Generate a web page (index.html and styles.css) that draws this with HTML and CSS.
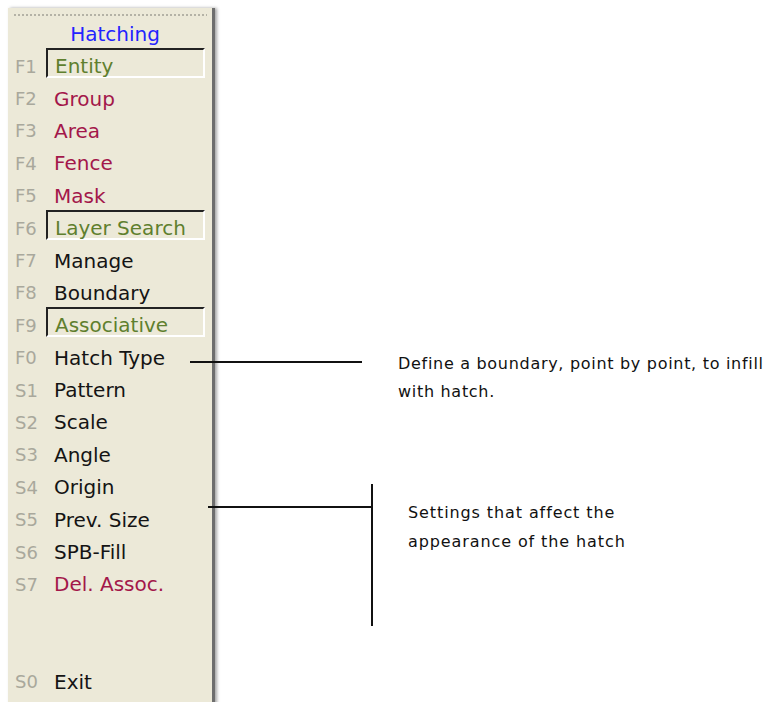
FILE: index.html
```html
<!DOCTYPE html>
<html lang="en">
<head>
  <meta charset="UTF-8" />
  <title>Hatching</title>
  <link rel="stylesheet" href="styles.css">
</head>
<body>

  <div class="page">
    <div class="panel">
      <div class="grip"></div>
      <div class="title">Hatching</div>
      <ul class="menu">
        <li><span class="key">F1</span><span class="label toggle">Entity</span></li>
        <li><span class="key">F2</span><span class="label red">Group</span></li>
        <li><span class="key">F3</span><span class="label red">Area</span></li>
        <li><span class="key">F4</span><span class="label red">Fence</span></li>
        <li><span class="key">F5</span><span class="label red">Mask</span></li>
        <li><span class="key">F6</span><span class="label toggle">Layer Search</span></li>
        <li><span class="key">F7</span><span class="label">Manage</span></li>
        <li><span class="key">F8</span><span class="label">Boundary</span></li>
        <li><span class="key">F9</span><span class="label toggle">Associative</span></li>
        <li><span class="key">F0</span><span class="label">Hatch Type</span></li>
        <li><span class="key">S1</span><span class="label">Pattern</span></li>
        <li><span class="key">S2</span><span class="label">Scale</span></li>
        <li><span class="key">S3</span><span class="label">Angle</span></li>
        <li><span class="key">S4</span><span class="label">Origin</span></li>
        <li><span class="key">S5</span><span class="label">Prev. Size</span></li>
        <li><span class="key">S6</span><span class="label">SPB-Fill</span></li>
        <li><span class="key">S7</span><span class="label red">Del. Assoc.</span></li>
        <li class="blank"></li>
        <li class="blank"></li>
        <li><span class="key">S0</span><span class="label">Exit</span></li>
      </ul>
    </div>

    <!-- callouts -->
    <div class="note note-boundary">
      <div class="line"></div>
      <p>Define a boundary, point by point, to infill<br>with hatch.</p>
    </div>

    <div class="note note-settings">
      <div class="line"></div>
      <div class="bar"></div>
      <p>Settings that affect the<br>appearance of the hatch</p>
    </div>
  </div>

</body>
</html>
```

FILE: styles.css
```css
* {
  box-sizing: border-box;
}

body {
  margin: 0;
  padding: 0;
  background-color: #fff;
  color: #111;
  font-family: 'DejaVu Sans', Verdana, sans-serif;
}

.page {
  position: relative;
  height: 702px;
  overflow: hidden;
}

.panel {
  width: 207px;
  height: 702px;
  margin-left: 8px;
  padding-top: 6px;
  background-color: #ece9d8;
  border-right: 3px solid #6e6e6e;
  box-shadow: 2px 0 3px rgba(0, 0, 0, 0.35);
  position: relative;
  top: 8px;
}

.grip {
  margin: 0 5px 0 6px;
  height: 2px;
  background-image: linear-gradient(to right, #b4b2a6 2px, transparent 2px);
  background-size: 4px 2px;
}

.title {
  height: 34px;
  line-height: 36px;
  padding-left: 10px;
  text-align: center;
  font-size: 20px;
  color: #2323ff;
}

.menu {
  list-style: none;
  margin: 0;
  padding: 0;
}

.menu li {
  display: flex;
  align-items: center;
  height: 32.4px;
}

.key {
  width: 46px;
  padding-left: 7px;
  font-size: 18px;
  color: #a9a89c;
}

.label {
  font-size: 20px;
  color: #141414;
}

.red {
  color: #a3174a;
}

.toggle {
  width: 159px;
  height: 30px;
  line-height: 28px;
  margin-top: -6px;
  margin-left: -8px;
  padding: 2px 0 0 7px;
  color: #5f7f2e;
  border-top: 2px solid #222;
  border-left: 2px solid #222;
  border-bottom: 2px solid #fff;
  border-right: 2px solid #fff;
}

/* callouts */

.note {
  position: absolute;
  font-family: 'DejaVu Sans', sans-serif;
  font-size: 16px;
  letter-spacing: 0.9px;
  color: #111;
}

.note p {
  margin: 0;
  line-height: 28px;
  white-space: nowrap;
}

.note .line {
  position: absolute;
  height: 2px;
  background-color: #111;
}

.note-boundary {
  left: 190px;
  top: 350px;
  width: 578px;
  letter-spacing: 0.7px;
}

.note-boundary .line {
  left: 0;
  top: 11px;
  width: 172px;
}

.note-boundary p {
  margin-left: 208px;
}

.note-settings {
  left: 208px;
  top: 484px;
  width: 450px;
}

.note-settings .line {
  left: 0;
  top: 22px;
  width: 164px;
}

.note-settings .bar {
  position: absolute;
  left: 163px;
  top: 0;
  width: 2px;
  height: 142px;
  background-color: #111;
}

.note-settings p {
  margin-left: 200px;
  padding-top: 14px;
  line-height: 29px;
}
```
